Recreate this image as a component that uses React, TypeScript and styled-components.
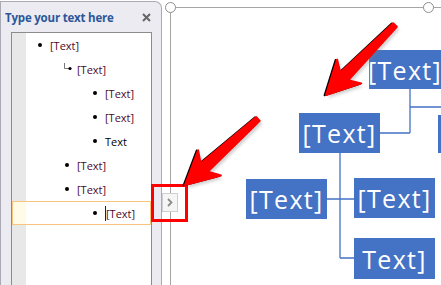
import React from "react";
import styled, { createGlobalStyle } from "styled-components";

const GlobalStyle = createGlobalStyle`
  html, body {
    margin: 0;
    padding: 0;
    background: #fff;
  }
  body {
    width: 441px;
    height: 285px;
    overflow: hidden;
    font-family: "Open Sans", "Liberation Sans", sans-serif;
  }
`;

type Item = {
  level: 1 | 2 | 3;
  text: string;
  marker?: "bullet" | "demoted";
  placeholder?: boolean;
  active?: boolean;
};

const items: Item[] = [
  { level: 1, text: "[Text]", placeholder: true },
  { level: 2, text: "[Text]", marker: "demoted", placeholder: true },
  { level: 3, text: "[Text]", placeholder: true },
  { level: 3, text: "[Text]", placeholder: true },
  { level: 3, text: "Text" },
  { level: 2, text: "[Text]", placeholder: true },
  { level: 2, text: "[Text]", placeholder: true },
  { level: 3, text: "[Text]", placeholder: true, active: true },
];

// bullet left edge, measured from the inside of the list box
const indents = { 1: 26, 2: 53, 3: 81 };

type Node = { x: number; y: number; w: number; h: number; text: string };

// page coordinates of the SmartArt shapes
const nodes: Node[] = [
  { x: 369, y: 50, w: 72, h: 39, text: "[Text]" },
  { x: 299, y: 113, w: 81, h: 40, text: "[Text]" },
  { x: 438, y: 115, w: 30, h: 38, text: "" },
  { x: 246, y: 179, w: 81, h: 40, text: "[Text]" },
  { x: 354, y: 178, w: 81, h: 40, text: "[Text]" },
  { x: 354, y: 238, w: 81, h: 41, text: "Text]" },
];

const FRAME_X = 171;
const FRAME_Y = 8;

function arrowPoints(tx: number, ty: number, hx: number, hy: number) {
  const len = Math.hypot(hx - tx, hy - ty);
  const ux = (hx - tx) / len;
  const uy = (hy - ty) / len;
  const nx = -uy;
  const ny = ux;
  const headLen = 30;
  const headW = 17;
  const neck = 5.5;
  const tailW = 2.5;
  const bx = hx - ux * headLen;
  const by = hy - uy * headLen;
  const p = (x: number, y: number) => `${x.toFixed(1)},${y.toFixed(1)}`;
  return [
    p(tx + nx * tailW, ty + ny * tailW),
    p(bx + ux * 4 + nx * neck, by + uy * 4 + ny * neck),
    p(bx - ux * 3 + nx * headW, by - uy * 3 + ny * headW),
    p(hx, hy),
    p(bx - ux * 3 - nx * headW, by - uy * 3 - ny * headW),
    p(bx + ux * 4 - nx * neck, by + uy * 4 - ny * neck),
    p(tx - nx * tailW, ty - ny * tailW),
  ].join(" ");
}

function Arrow({ from, to }: { from: [number, number]; to: [number, number] }) {
  const pts = arrowPoints(from[0], from[1], to[0], to[1]);
  return (
    <g>
      <polygon
        points={pts}
        fill="#7a7a7a"
        opacity={0.35}
        transform="translate(2.5 3)"
        filter="url(#soft)"
      />
      <polygon
        points={pts}
        fill="#000"
        stroke="#000"
        strokeWidth={2}
        strokeLinejoin="round"
        transform="translate(-1.4 0.3)"
      />
      <polygon
        points={pts}
        fill="#ff0000"
        stroke="#ff0000"
        strokeWidth={2}
        strokeLinejoin="round"
      />
    </g>
  );
}

export default function App() {
  return (
    <>
      <GlobalStyle />
      <Page>
        <TextPane>
          <PaneHeader>
            <PaneTitle>Type your text here</PaneTitle>
            <CloseIcon viewBox="0 0 9 9">
              <path d="M1 1 L8 8 M8 1 L1 8" />
            </CloseIcon>
          </PaneHeader>
          <ListBox>
            {items.map((item, i) => (
              <Row key={i} $indent={indents[item.level]} $active={item.active}>
                {item.marker === "demoted" ? (
                  <Demoted viewBox="0 0 9 8">
                    <path d="M1.5 0 V5.5 H6" />
                    <circle cx="7" cy="5.5" r="1.6" />
                  </Demoted>
                ) : (
                  <Bullet />
                )}
                {item.active && <Caret />}
                <RowText $placeholder={item.placeholder}>{item.text}</RowText>
              </Row>
            ))}
          </ListBox>
        </TextPane>

        <Canvas>
          <Frame>
            <Handle $x={-6.5} />
            <Handle $x={251.5} />
            <Connectors viewBox="0 0 441 285">
              <path d="M410 89 V133 M410 107 H445 M380 133 H410 M340 153 V258 M327 199 H354 M340 258 H354" />
            </Connectors>
            {nodes.map((n, i) => (
              <Shape
                key={i}
                $x={n.x - FRAME_X}
                $y={n.y - FRAME_Y}
                $w={n.w}
                $h={n.h}
              >
                {n.text}
              </Shape>
            ))}
          </Frame>
        </Canvas>

        <ExpandButton>
          <svg width="6" height="9" viewBox="0 0 6 9">
            <path d="M1 1 L4.5 4.5 L1 8" />
          </svg>
        </ExpandButton>

        <Annotations viewBox="0 0 441 285">
          <defs>
            <filter id="soft" x="-20%" y="-20%" width="140%" height="140%">
              <feGaussianBlur stdDeviation="1.5" />
            </filter>
          </defs>
          <rect
            x="152.5"
            y="185.5"
            width="34"
            height="35"
            fill="none"
            stroke="#ff0000"
            strokeWidth="3"
          />
          <Arrow from={[395, 25]} to={[326, 95]} />
          <Arrow from={[258, 119]} to={[185, 185]} />
        </Annotations>
      </Page>
    </>
  );
}

const Page = styled.div`
  position: relative;
  display: flex;
  width: 441px;
  height: 285px;
  overflow: hidden;
  background: #fff;
`;

const TextPane = styled.div`
  flex: none;
  width: 162px;
  margin-top: 1px;
  box-sizing: border-box;
  display: flex;
  flex-direction: column;
  background: #ebebf1;
  border: 1px solid #a9aab3;
  border-bottom: none;
  border-top-right-radius: 7px;
`;

const PaneHeader = styled.div`
  height: 30px;
  display: flex;
  align-items: center;
  justify-content: space-between;
  padding: 0 10px 0 4px;
`;

const PaneTitle = styled.span`
  font-size: 11.5px;
  font-weight: 700;
  color: #2b579a;
  letter-spacing: -0.2px;
`;

const CloseIcon = styled.svg`
  width: 9px;
  height: 9px;
  stroke: #666;
  stroke-width: 2;
`;

const ListBox = styled.div`
  flex: 1;
  margin: 0 9px 0 10px;
  background: linear-gradient(to right, #e8e8e8 14px, #fff 14px);
  border: 1px solid #8b8b8b;
  border-bottom: none;
`;

const Row = styled.div<{ $indent: number; $active?: boolean }>`
  height: 24px;
  box-sizing: border-box;
  display: flex;
  align-items: center;
  padding-left: ${(p) => (p.$active ? p.$indent - 1 : p.$indent)}px;
  border: ${(p) => (p.$active ? "1px solid #f8c47e" : "none")};
  background: ${(p) =>
    p.$active
      ? "linear-gradient(to right, #fffbe6 13px, #fff 13px)"
      : "transparent"};
`;

const Bullet = styled.span`
  width: 4px;
  height: 4px;
  border-radius: 50%;
  background: #000;
  margin-right: 8px;
`;

const Demoted = styled.svg`
  width: 9px;
  height: 8px;
  margin: -4px 5px 0 -2px;
  fill: #000;
  path {
    fill: none;
    stroke: #777;
    stroke-width: 1;
  }
`;

const Caret = styled.span`
  width: 1px;
  height: 15px;
  background: #1b1b55;
`;

const RowText = styled.span<{ $placeholder?: boolean }>`
  font-size: 11px;
  color: ${(p) => (p.$placeholder ? "#4a0a2a" : "#000")};
`;

const Canvas = styled.div`
  flex: 1;
  display: flex;
  padding: 7px 0 0 8px;
`;

const Frame = styled.div`
  position: relative;
  flex: 1;
  border-top: 1px solid #a6a6a6;
  border-left: 1px solid #a6a6a6;
`;

const Handle = styled.span<{ $x: number }>`
  position: absolute;
  left: ${(p) => p.$x}px;
  top: -6.5px;
  width: 11px;
  height: 11px;
  box-sizing: border-box;
  border-radius: 50%;
  border: 1.5px solid #8e8e8e;
  background: #fff;
`;

const Connectors = styled.svg`
  position: absolute;
  left: -${FRAME_X}px;
  top: -${FRAME_Y}px;
  width: 441px;
  height: 285px;
  overflow: visible;
  path {
    fill: none;
    stroke: #4472c4;
    stroke-width: 1.3;
  }
`;

const Shape = styled.div<{ $x: number; $y: number; $w: number; $h: number }>`
  position: absolute;
  left: ${(p) => p.$x}px;
  top: ${(p) => p.$y}px;
  width: ${(p) => p.$w}px;
  height: ${(p) => p.$h}px;
  display: flex;
  align-items: center;
  justify-content: center;
  background: #4472c4;
  color: #fff;
  font-size: 25px;
  letter-spacing: 1.3px;
  white-space: nowrap;
`;

const ExpandButton = styled.div`
  position: absolute;
  left: 162px;
  top: 193px;
  width: 16px;
  height: 19px;
  box-sizing: border-box;
  display: flex;
  align-items: center;
  justify-content: center;
  background: #f5f5f5;
  border: 1px solid #cfcfcf;
  path {
    fill: none;
    stroke: #8c8c8c;
    stroke-width: 1.8;
  }
`;

const Annotations = styled.svg`
  position: absolute;
  left: 0;
  top: 0;
  width: 441px;
  height: 285px;
  pointer-events: none;
`;
